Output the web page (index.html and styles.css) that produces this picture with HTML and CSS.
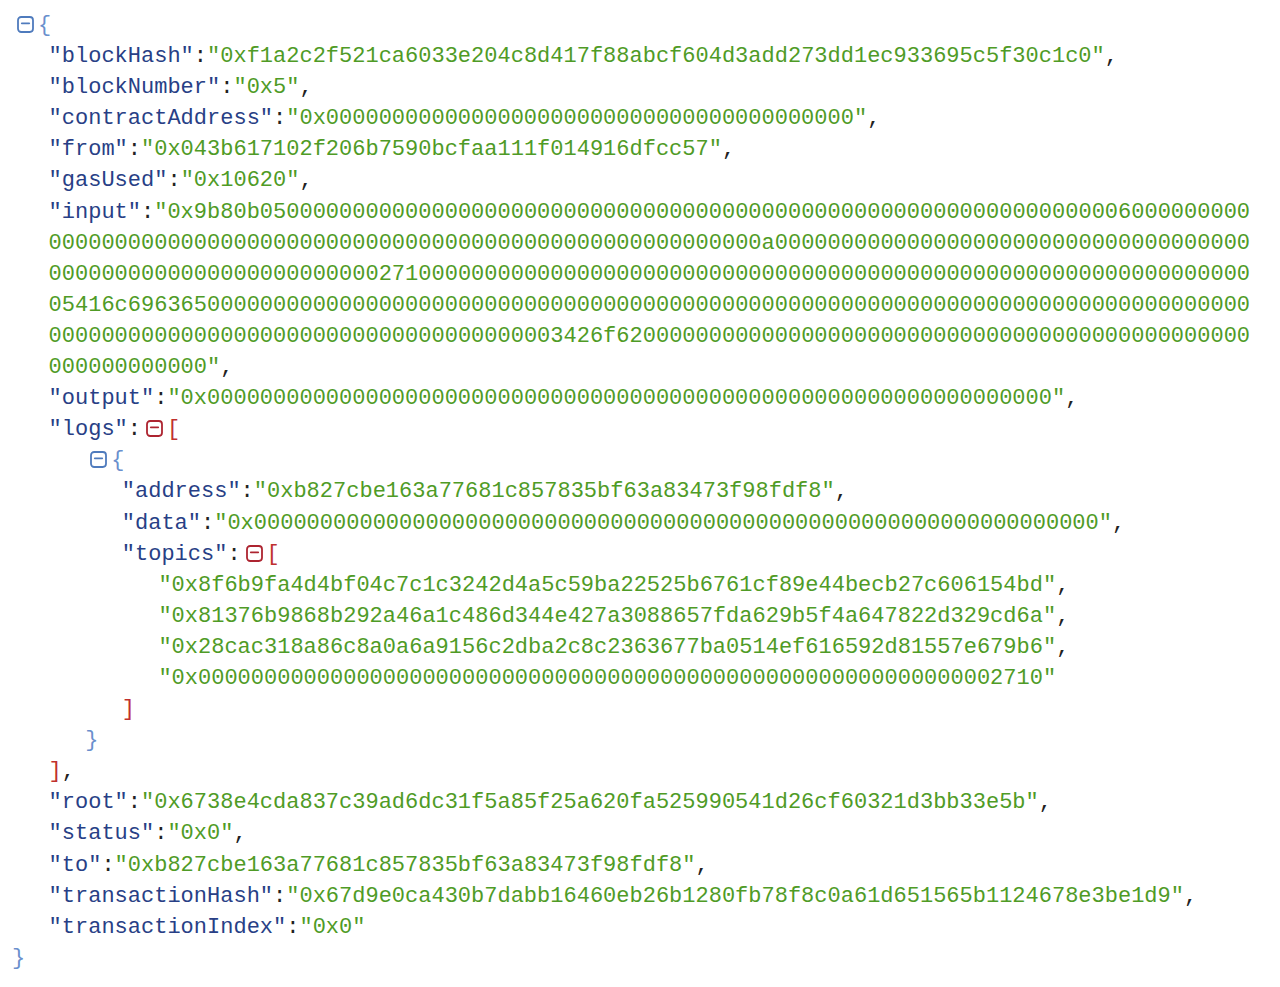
FILE: index.html
```html
<!DOCTYPE html>
<html lang="en">
<head>
<meta charset="utf-8">
<title>JSON Viewer</title>
<link rel="stylesheet" href="styles.css">
</head>
<body>
<div class="viewer">
  <div class="line"><svg class="tg tg-obj" viewBox="0 0 17 17"><rect x="1" y="1" width="15" height="15" rx="3.2"/><line x1="4.8" y1="7.3" x2="12.2" y2="7.3"/></svg><span class="brace">{</span></div>
  <div class="block">
    <div class="line"><span class="key">"blockHash"</span><span class="p">:</span><span class="str">"0xf1a2c2f521ca6033e204c8d417f88abcf604d3add273dd1ec933695c5f30c1c0"</span><span class="p">,</span></div>
    <div class="line"><span class="key">"blockNumber"</span><span class="p">:</span><span class="str">"0x5"</span><span class="p">,</span></div>
    <div class="line"><span class="key">"contractAddress"</span><span class="p">:</span><span class="str">"0x0000000000000000000000000000000000000000"</span><span class="p">,</span></div>
    <div class="line"><span class="key">"from"</span><span class="p">:</span><span class="str">"0x043b617102f206b7590bcfaa111f014916dfcc57"</span><span class="p">,</span></div>
    <div class="line"><span class="key">"gasUsed"</span><span class="p">:</span><span class="str">"0x10620"</span><span class="p">,</span></div>
    <div class="line"><span class="key">"input"</span><span class="p">:</span><span class="str">"0x9b80b050<wbr>0000000000<wbr>0000000000<wbr>0000000000<wbr>0000000000<wbr>0000000000<wbr>0000000000<wbr>0060<wbr>0000000000<wbr>0000000000<wbr>0000000000<wbr>0000000000<wbr>0000000000<wbr>0000000000<wbr>00a0<wbr>0000000000<wbr>0000000000<wbr>0000000000<wbr>0000000000<wbr>0000000000<wbr>0000000000<wbr>2710<wbr>0000000000<wbr>0000000000<wbr>0000000000<wbr>0000000000<wbr>0000000000<wbr>0000000000<wbr>0005<wbr>416c696365<wbr>0000000000<wbr>0000000000<wbr>0000000000<wbr>0000000000<wbr>0000000000<wbr>0000<wbr>0000000000<wbr>0000000000<wbr>0000000000<wbr>0000000000<wbr>0000000000<wbr>0000000000<wbr>0003<wbr>426f62<wbr>0000000000<wbr>0000000000<wbr>0000000000<wbr>0000000000<wbr>0000000000<wbr>00000000"</span><span class="p">,</span></div>
    <div class="line"><span class="key">"output"</span><span class="p">:</span><span class="str">"0x0000000000000000000000000000000000000000000000000000000000000000"</span><span class="p">,</span></div>
    <div class="line"><span class="key">"logs"</span><span class="p">:</span><svg class="tg tg-arr" viewBox="0 0 17 17"><rect x="1" y="1" width="15" height="15" rx="3.2"/><line x1="4.8" y1="7.3" x2="12.2" y2="7.3"/></svg><span class="bracket">[</span></div>
    <div class="block">
      <div class="line"><svg class="tg tg-obj" viewBox="0 0 17 17"><rect x="1" y="1" width="15" height="15" rx="3.2"/><line x1="4.8" y1="7.3" x2="12.2" y2="7.3"/></svg><span class="brace">{</span></div>
      <div class="block">
        <div class="line"><span class="key">"address"</span><span class="p">:</span><span class="str">"0xb827cbe163a77681c857835bf63a83473f98fdf8"</span><span class="p">,</span></div>
        <div class="line"><span class="key">"data"</span><span class="p">:</span><span class="str">"0x0000000000000000000000000000000000000000000000000000000000000000"</span><span class="p">,</span></div>
        <div class="line"><span class="key">"topics"</span><span class="p">:</span><svg class="tg tg-arr" viewBox="0 0 17 17"><rect x="1" y="1" width="15" height="15" rx="3.2"/><line x1="4.8" y1="7.3" x2="12.2" y2="7.3"/></svg><span class="bracket">[</span></div>
        <div class="block">
          <div class="line"><span class="str">"0x8f6b9fa4d4bf04c7c1c3242d4a5c59ba22525b6761cf89e44becb27c606154bd"</span><span class="p">,</span></div>
          <div class="line"><span class="str">"0x81376b9868b292a46a1c486d344e427a3088657fda629b5f4a647822d329cd6a"</span><span class="p">,</span></div>
          <div class="line"><span class="str">"0x28cac318a86c8a0a6a9156c2dba2c8c2363677ba0514ef616592d81557e679b6"</span><span class="p">,</span></div>
          <div class="line"><span class="str">"0x0000000000000000000000000000000000000000000000000000000000002710"</span></div>
        </div>
        <div class="line"><span class="bracket">]</span></div>
      </div>
      <div class="line"><span class="brace">}</span></div>
    </div>
    <div class="line"><span class="bracket">]</span><span class="p">,</span></div>
    <div class="line"><span class="key">"root"</span><span class="p">:</span><span class="str">"0x6738e4cda837c39ad6dc31f5a85f25a620fa525990541d26cf60321d3bb33e5b"</span><span class="p">,</span></div>
    <div class="line"><span class="key">"status"</span><span class="p">:</span><span class="str">"0x0"</span><span class="p">,</span></div>
    <div class="line"><span class="key">"to"</span><span class="p">:</span><span class="str">"0xb827cbe163a77681c857835bf63a83473f98fdf8"</span><span class="p">,</span></div>
    <div class="line"><span class="key">"transactionHash"</span><span class="p">:</span><span class="str">"0x67d9e0ca430b7dabb16460eb26b1280fb78f8c0a61d651565b1124678e3be1d9"</span><span class="p">,</span></div>
    <div class="line"><span class="key">"transactionIndex"</span><span class="p">:</span><span class="str">"0x0"</span></div>
  </div>
  <div class="line"><span class="brace">}</span></div>
</div>
</body>
</html>
```

FILE: styles.css
```css
html, body {
  margin: 0;
  padding: 0;
  background: #ffffff;
}

.viewer {
  padding: 10px 26px 0 12px;
  font-family: "Liberation Mono", "Courier New", monospace;
  font-size: 22px;
  line-height: 31.1px;
  color: #222222;
}

.block {
  padding-left: 36.6px;
}

.line {
  word-break: break-all;
}

.key {
  color: #283f86;
}

.str {
  color: #4f9b26;
}

.p {
  color: #222222;
}

.brace {
  color: #6a8fcd;
}

.bracket {
  color: #c0302e;
}

.tg {
  width: 17px;
  height: 17px;
  margin: 0 4px 0 5px;
  vertical-align: -2px;
  fill: none;
  stroke-width: 1.8;
  stroke-linecap: round;
}

.tg-obj {
  stroke: #4f7bbd;
}

.tg-arr {
  stroke: #ad2430;
}
```
